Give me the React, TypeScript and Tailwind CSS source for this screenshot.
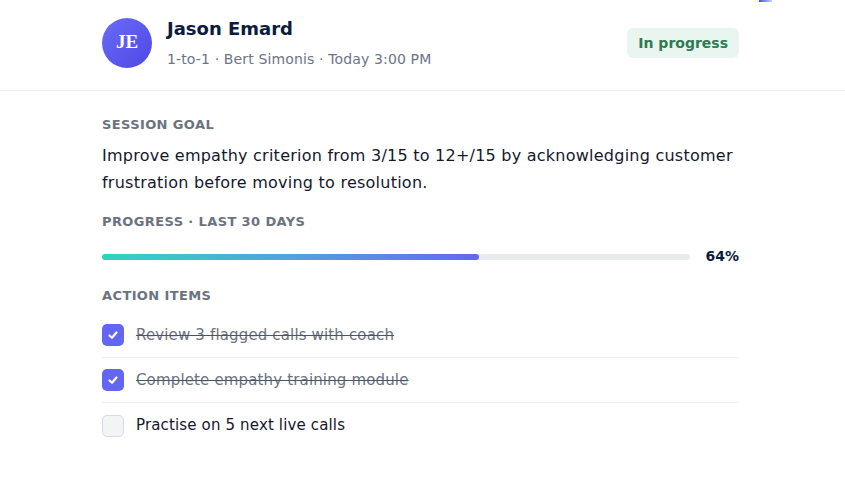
export default function App() {
  const items = [
    { label: 'Review 3 flagged calls with coach', done: true },
    { label: 'Complete empathy training module', done: true },
    { label: 'Practise on 5 next live calls', done: false },
  ];

  return (
    <div className="relative min-h-[485px] w-full bg-white font-['DejaVu_Sans',sans-serif] text-[#1b1f3a]">
      <div className="absolute left-[759px] top-0 h-[2px] w-[13px] bg-gradient-to-r from-[#4f46e5] to-[#c7d2fe]"></div>

      <header className="flex h-[91px] items-center justify-between border-b border-[#eef0f3] pb-[5px] pl-[102px] pr-[106px]">
        <div className="flex items-center gap-[15px]">
          <div className="flex h-[50px] w-[50px] items-center justify-center rounded-full bg-gradient-to-br from-[#6a6cf6] to-[#4f46e5] font-['Liberation_Serif',serif] text-[19px] font-bold text-white">
            JE
          </div>
          <div className="flex flex-col">
            <span className="text-[18px] font-semibold leading-[26px] text-[#0b1b3d]">Jason Emard</span>
            <span className="mt-[7px] text-[14px] leading-[20px] tracking-[0.01em] text-[#6b7488]">1-to-1 · Bert Simonis · Today 3:00 PM</span>
          </div>
        </div>
        <span className="rounded-[6px] bg-[#e9f5ef] px-[11px] py-[5px] text-[14px] font-bold leading-[20px] text-[#2e7a55]">
          In progress
        </span>
      </header>

      <main className="pl-[102px] pr-[106px] pt-[25px]">
        <h3 className="text-[13px] font-bold uppercase leading-[18px] tracking-[0.03em] text-[#6b7280]">Session goal</h3>
        <p className="mt-[8px] text-[16px] leading-[27px] tracking-[0.015em] text-[#14182e]">
          Improve empathy criterion from 3/15 to 12+/15 by acknowledging customer frustration before moving to resolution.
        </p>

        <h3 className="mt-[17px] text-[13px] font-bold uppercase leading-[18px] tracking-[0.03em] text-[#6b7280]">
          Progress · Last 30 days
        </h3>
        <div className="mt-[15px] flex items-center gap-[15px]">
          <div className="h-[6px] flex-1 rounded-full bg-[#e9ebef]">
            <div className="h-full w-[64%] rounded-full bg-gradient-to-r from-[#2dd4bf] to-[#6366f1]"></div>
          </div>
          <span className="text-[14px] font-bold text-[#0b1b3d]">64%</span>
        </div>

        <h3 className="mt-[20px] text-[13px] font-bold uppercase leading-[18px] tracking-[0.03em] text-[#6b7280]">Action items</h3>
        <ul className="mt-[8px]">
          {items.map((item, i) => (
            <li
              key={item.label}
              className={`flex h-[45px] items-center gap-[12px] ${i < items.length - 1 ? 'border-b border-[#eef0f3]' : ''}`}
            >
              {item.done ? (
                <span className="flex h-[22px] w-[22px] items-center justify-center rounded-[5px] bg-[#6366f1]">
                  <svg width="12" height="12" viewBox="0 0 12 12" fill="none">
                    <path d="M2.5 6.5 L5 8.8 L9.5 3.5" stroke="white" strokeWidth="2.2" strokeLinecap="round" strokeLinejoin="round" />
                  </svg>
                </span>
              ) : (
                <span className="h-[22px] w-[22px] rounded-[5px] border border-[#d6dae1] bg-[#f3f4f6]"></span>
              )}
              <span
                className={`text-[15px] tracking-[0.01em] ${item.done ? 'text-[#6b7280] line-through decoration-[#4b5563]' : 'text-[#14182e]'}`}
              >
                {item.label}
              </span>
            </li>
          ))}
        </ul>
      </main>
    </div>
  );
}
